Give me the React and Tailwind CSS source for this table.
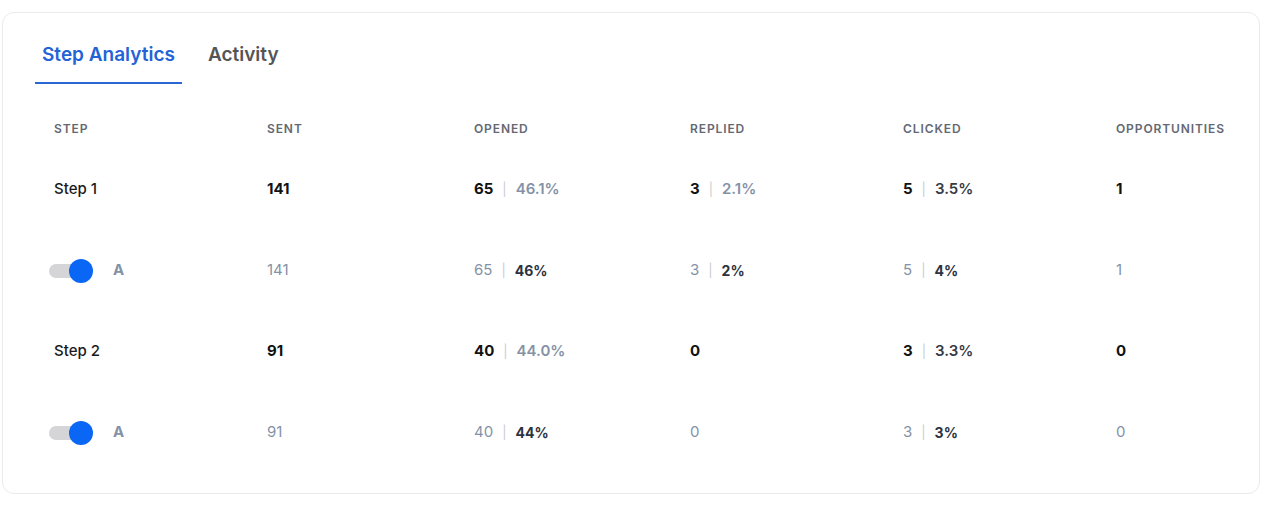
import React from "react";

const cols = "grid grid-cols-[213px_207px_216px_213px_213px_1fr] items-center";

function Sep() {
  return <span className="mx-[9px] text-[13px] font-normal text-[#c9ccd3]">|</span>;
}

function StepPair({ n, p, pDark }) {
  return (
    <div className="flex items-center">
      <span className="font-bold text-[#121212]">{n}</span>
      <Sep />
      <span className={pDark ? "font-semibold text-[#343a46]" : "font-semibold text-[#8592a6]"}>{p}</span>
    </div>
  );
}

function VarPair({ n, p }) {
  return (
    <div className="flex items-center">
      <span className="font-normal text-[#8592a6]">{n}</span>
      <Sep />
      <span className="font-bold text-[#2c3240] text-[14px]">{p}</span>
    </div>
  );
}

function Toggle() {
  return (
    <div className="relative -ml-[5px] h-[24px] w-[44px]">
      <div className="absolute left-0 top-[5px] h-[14px] w-[31px] rounded-full bg-[#d5d5d7]" />
      <div className="absolute left-[20px] top-0 h-[24px] w-[24px] rounded-full bg-[#0a66f5]" />
    </div>
  );
}

function StepRow({ name, sent, opened, replied, clicked, opp }) {
  return (
    <div className={cols + " h-[81px] text-[15px]"}>
      <div className="font-medium text-[#1a1a1a]">{name}</div>
      <div className="font-bold text-[#121212]">{sent}</div>
      <div>{opened}</div>
      <div>{replied}</div>
      <div>{clicked}</div>
      <div className="font-bold text-[#121212]">{opp}</div>
    </div>
  );
}

function VarRow({ sent, opened, replied, clicked, opp }) {
  return (
    <div className={cols + " h-[81px] text-[15px]"}>
      <div className="flex items-center">
        <Toggle />
        <span className="ml-[20px] font-bold text-[#8592a6]">A</span>
      </div>
      <div className="text-[#8592a6]">{sent}</div>
      <div>{opened}</div>
      <div>{replied}</div>
      <div>{clicked}</div>
      <div className="text-[#8592a6]">{opp}</div>
    </div>
  );
}

export default function App() {
  return (
    <div className="min-h-[505px] bg-white pl-[2px] pt-[12px]" style={{ fontFamily: "Inter, 'Noto Sans', sans-serif" }}>
      <div className="h-[482px] w-[1258px] rounded-[12px] border border-[#ebebeb] bg-white pt-[30px]">
        <div className="flex gap-[19px] pl-[32px]">
          <button className="border-b-[2px] border-[#2a66d4] px-[7px] pb-[15px] text-[19px] font-semibold leading-[24px] text-[#2463d6]">
            Step Analytics
          </button>
          <button className="border-b-[2px] border-transparent px-[7px] pb-[15px] text-[19px] font-semibold leading-[24px] text-[#555555]">
            Activity
          </button>
        </div>
        <div className="mt-[24px] pl-[51px]">
          <div className={cols + " h-[41px] text-[12px] font-semibold uppercase tracking-[0.075em] text-[#646873]"}>
            <div>Step</div>
            <div>Sent</div>
            <div>Opened</div>
            <div>Replied</div>
            <div>Clicked</div>
            <div>Opportunities</div>
          </div>
          <StepRow
            name="Step 1"
            sent="141"
            opened={<StepPair n="65" p="46.1%" />}
            replied={<StepPair n="3" p="2.1%" />}
            clicked={<StepPair n="5" p="3.5%" pDark />}
            opp="1"
          />
          <VarRow
            sent="141"
            opened={<VarPair n="65" p="46%" />}
            replied={<VarPair n="3" p="2%" />}
            clicked={<VarPair n="5" p="4%" />}
            opp="1"
          />
          <StepRow
            name="Step 2"
            sent="91"
            opened={<StepPair n="40" p="44.0%" />}
            replied={<span className="font-bold text-[#121212]">0</span>}
            clicked={<StepPair n="3" p="3.3%" pDark />}
            opp="0"
          />
          <VarRow
            sent="91"
            opened={<VarPair n="40" p="44%" />}
            replied={<span className="text-[#8592a6]">0</span>}
            clicked={<VarPair n="3" p="3%" />}
            opp="0"
          />
        </div>
      </div>
    </div>
  );
}
